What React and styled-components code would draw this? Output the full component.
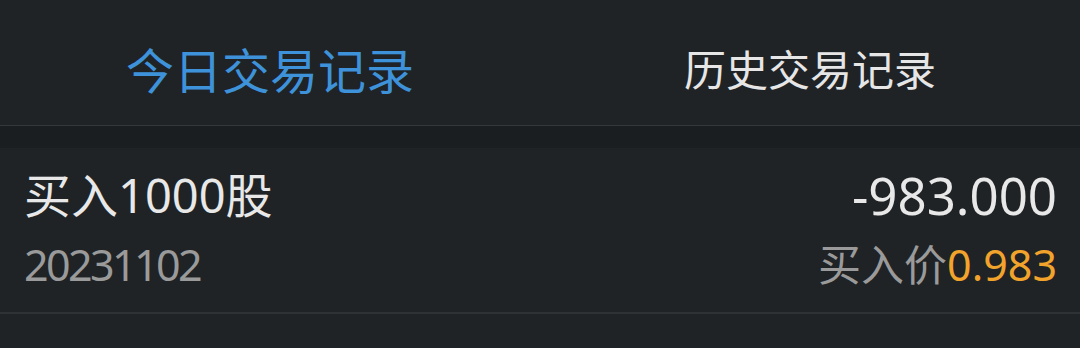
import React from 'react';
import styled, { createGlobalStyle } from 'styled-components';

const GlobalStyle = createGlobalStyle`
  html, body {
    margin: 0;
    padding: 0;
    background: #1f2326;
  }
  body {
    font-family: "Noto Sans", "Noto Sans CJK SC", sans-serif;
  }
`;

const Page = styled.div`
  width: 1080px;
  height: 348px;
  background: #1f2326;
  overflow: hidden;
`;

const Tabs = styled.div`
  display: flex;
  height: 125px;
  border-bottom: 1px solid #34383b;
`;

const Tab = styled.div`
  flex: 1;
  display: flex;
  align-items: center;
  justify-content: center;
  padding-top: 10px;
  font-family: "Noto Sans CJK SC", sans-serif;
  font-size: ${p => (p.active ? '48px' : '42px')};
  color: ${p => (p.active ? '#3e92da' : '#e6e6e6')};
`;

const Gap = styled.div`
  height: 22px;
  background: #1b1e21;
`;

const Row = styled.div`
  display: flex;
  justify-content: space-between;
  height: 164px;
  padding: 0 23px 0 24px;
  border-bottom: 2px solid #2e3235;
`;

const Col = styled.div`
  display: flex;
  flex-direction: column;
  align-items: ${p => (p.right ? 'flex-end' : 'flex-start')};
  padding-top: 18px;
`;

const Title = styled.div`
  font-size: ${p => p.size || 47}px;
  line-height: 58px;
  color: #e8e8e8;
`;

const Sub = styled.div`
  font-size: 43px;
  line-height: 58px;
  margin-top: 12px;
  color: #9a9a9a;
  letter-spacing: ${p => (p.tight ? '-2.6px' : '0')};
`;

const Price = styled.span`
  color: #f2a32b;
`;

export default function App() {
  return (
    <Page>
      <GlobalStyle />
      <Tabs>
        <Tab active>今日交易记录</Tab>
        <Tab>历史交易记录</Tab>
      </Tabs>
      <Gap />
      <Row>
        <Col>
          <Title>买入1000股</Title>
          <Sub tight>20231102</Sub>
        </Col>
        <Col right>
          <Title size={51}>-983.000</Title>
          <Sub>
            买入价<Price>0.983</Price>
          </Sub>
        </Col>
      </Row>
    </Page>
  );
}
